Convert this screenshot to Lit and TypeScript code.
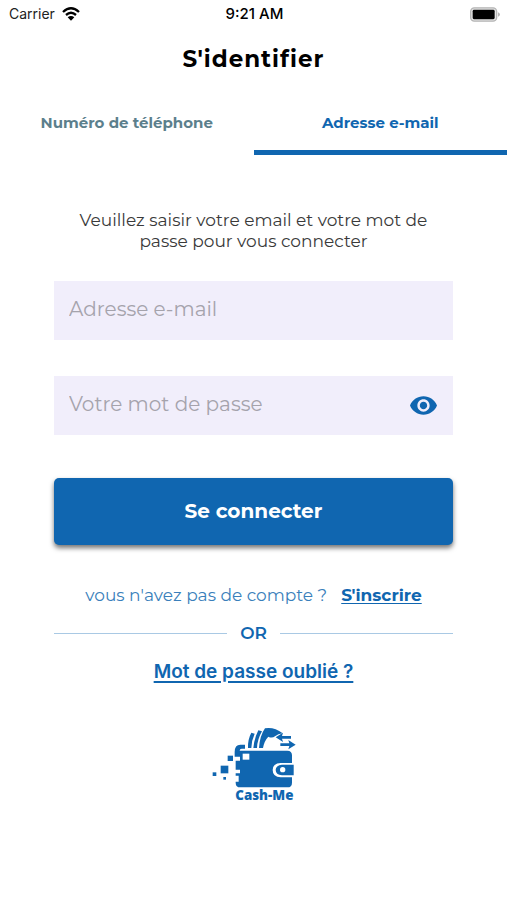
import { LitElement, html, css, svg } from "lit";
import { customElement, state } from "lit/decorators.js";

const wifiIcon = svg`
  <svg class="wifi" viewBox="0 0 54 42" aria-hidden="true">
    <g fill="none" stroke="#000" stroke-width="7">
      <path d="M3 15 Q27 -7 51 15" />
      <path d="M12 24 Q27 11 42 24" />
    </g>
    <path d="M27 41 L17 31 Q27 23 37 31 Z" />
  </svg>`;

const batteryIcon = svg`
  <svg class="battery" viewBox="0 0 90 44" aria-hidden="true">
    <rect x="2" y="2" width="78" height="40" rx="11" fill="#e4e4e4" stroke="#b4b4b4" stroke-width="4" />
    <rect x="8" y="8" width="66" height="28" rx="4" fill="#000" />
    <path d="M84 15 Q90 18 90 22 Q90 26 84 29 Z" fill="#b4b4b4" />
  </svg>`;

const eyeIcon = svg`
  <svg class="eye" viewBox="1 4.5 22 15" aria-hidden="true">
    <path fill="#1066b0" d="M12 4.5C7 4.5 2.73 7.61 1 12c1.73 4.39 6 7.5 11 7.5s9.27-3.11 11-7.5c-1.73-4.39-6-7.5-11-7.5zM12 17c-2.76 0-5-2.24-5-5s2.24-5 5-5 5 2.24 5 5-2.24 5-5 5zm0-8c-1.66 0-3 1.34-3 3s1.34 3 3 3 3-1.34 3-3-1.34-3-3-3z" />
  </svg>`;

const logo = svg`
  <svg class="logo" viewBox="-4 0 300 270" role="img" aria-label="Cash-Me">
    <g fill="#1066b0">
      <path d="M128 84 Q127 58 138 38 L148 41 Q139 60 138 84 Z" />
      <path d="M144 84 Q147 54 159 31 L170 34 Q156 58 155 84 Z" />
      <path d="M161 84 Q163 48 179 25 Q206 20 232 40 Q218 41 209 49 Q200 56 189 50 Q177 62 173 84 Z" />
      <path d="M211 52 L233 38 L230 48 H257 V56 H230 L233 66 Z" />
      <path d="M271 74 L249 60 L252 70 H225 V78 H252 L249 88 Z" />
      <path d="M88 96 Q88 74 105 74 H119 V86 H109 Q103 86 103 92 H246 Q260 92 260 106 V129 H226 Q202 130 202 150 Q202 171 226 172 H260 V188 Q260 202 246 202 H105 Q91 202 91 188 V185 H100 V167 H91 V160 H104 V149 H91 V122 H104 V110 H88 Z" />
      <path d="M230 134 H265 V166 H230 Q211 164 211 150 Q211 136 230 134 Z" />
      <rect x="67" y="107" width="16" height="16" />
      <rect x="46" y="137" width="23" height="23" />
      <rect x="22" y="157" width="11" height="11" />
      <rect x="54" y="171" width="8" height="8" />
    </g>
    <rect x="112" y="101" width="20" height="18" fill="#fff" />
    <circle cx="232" cy="149" r="8" fill="#fff" />
    <text class="brand" x="177" y="239" text-anchor="middle">Cash-Me</text>
  </svg>`;

@customElement("app-root")
export class AppRoot extends LitElement {
  @state() private passwordVisible = false;

  static styles = css`
    :host {
      display: block;
      min-height: 100vh;
      background: #fff;
      color: #000;
      font-family: Montserrat, Inter, "Liberation Sans", sans-serif;
    }
    * { box-sizing: border-box; }
    button, input { font-family: inherit; margin: 0; border: 0; }
    button { cursor: pointer; }
    .status {
      display: grid;
      grid-template-columns: 1fr auto 1fr;
      align-items: center;
      height: 28px;
      padding: 0 7px 0 9px;
      font-family: Inter, sans-serif;
      font-size: 14px;
      line-height: 20px;
    }
    .carrier { display: flex; align-items: center; gap: 7px; color: #222; }
    .time { font-size: 15px; font-weight: 500; }
    .wifi { width: 18px; height: 14px; }
    .battery { width: 30px; height: 15px; justify-self: end; }
    h1 {
      margin: 16px 0 0;
      text-align: center;
      font-size: 23px;
      line-height: 30px;
      font-weight: 700;
      letter-spacing: 1px;
    }
    .tabs { display: flex; margin-top: 16px; }
    .tab {
      flex: 1;
      height: 65px;
      padding: 5px 0 0;
      background: none;
      border-bottom: 5px solid transparent;
      color: #5c7f8c;
      font-size: 15px;
      line-height: 20px;
      font-weight: 700;
    }
    .tab.active { color: #1066b0; border-color: #1066b0; }
    .form {
      display: flex;
      flex-direction: column;
      padding: 55px 54px 0;
    }
    .intro {
      margin: 0 0 29px;
      padding: 0 16px;
      text-align: center;
      color: #3a3a3a;
      font-size: 17px;
      line-height: 21px;
    }
    .field {
      display: flex;
      align-items: center;
      height: 59px;
      margin-bottom: 36px;
      padding: 0 16px 0 15px;
      background: #f1eefb;
    }
    .field input {
      flex: 1;
      min-width: 0;
      padding: 0 0 4px;
      background: none;
      outline: none;
      color: #333;
      font-size: 20px;
      line-height: 24px;
    }
    .field input::placeholder { color: #a5a3ac; opacity: 1; }
    .reveal { display: flex; padding: 0; background: none; }
    .eye { width: 27px; height: 19px; }
    .submit {
      height: 67px;
      margin-top: 7px;
      padding: 0 0 2px;
      border-radius: 5px;
      background: #1066b0;
      box-shadow: 0 3px 5px rgba(0, 0, 0, 0.55);
      color: #fff;
      font-size: 20px;
      line-height: 24px;
      font-weight: 700;
    }
    .signup {
      display: flex;
      justify-content: center;
      gap: 14px;
      margin: 38px 0 0;
      color: #3a7fbb;
      font-size: 17px;
      line-height: 24px;
    }
    a { color: #1066b0; font-weight: 700; text-underline-offset: 2px; }
    .or {
      display: flex;
      align-items: center;
      gap: 13px;
      margin-top: 14px;
      color: #1066b0;
      font-size: 17px;
      line-height: 24px;
      font-weight: 600;
    }
    .or::before, .or::after { content: ""; flex: 1; height: 1px; background: #a9c9e4; }
    .forgot {
      align-self: center;
      margin-top: 15px;
      font-family: Inter, sans-serif;
      font-size: 19px;
      line-height: 24px;
      font-weight: 600;
      text-decoration-thickness: 2px;
      text-underline-offset: 3px;
    }
    .logo { align-self: center; width: 100px; height: 90px; margin-top: 36px; }
    .brand {
      fill: #1066b0;
      font-family: "Open Sans", sans-serif;
      font-size: 40px;
      font-weight: 800;
    }
  `;

  render() {
    return html`
      <header class="status">
        <div class="carrier"><span>Carrier</span>${wifiIcon}</div>
        <span class="time">9:21 AM</span>
        ${batteryIcon}
      </header>
      <main>
        <h1>S'identifier</h1>
        <div class="tabs" role="tablist">
          <button class="tab" role="tab" aria-selected="false">Numéro de téléphone</button>
          <button class="tab active" role="tab" aria-selected="true">Adresse e-mail</button>
        </div>
        <form class="form" @submit=${(e: Event) => e.preventDefault()}>
          <p class="intro">Veuillez saisir votre email et votre mot de passe pour vous connecter</p>
          <label class="field">
            <input type="email" placeholder="Adresse e-mail" aria-label="Adresse e-mail" />
          </label>
          <div class="field">
            <input
              type=${this.passwordVisible ? "text" : "password"}
              placeholder="Votre mot de passe"
              aria-label="Votre mot de passe"
            />
            <button
              class="reveal"
              type="button"
              aria-label="Afficher le mot de passe"
              @click=${() => (this.passwordVisible = !this.passwordVisible)}
            >${eyeIcon}</button>
          </div>
          <button class="submit" type="submit">Se connecter</button>
          <p class="signup"><span>vous n'avez pas de compte ?</span><a href="#inscription">S'inscrire</a></p>
          <div class="or">OR</div>
          <a class="forgot" href="#oubli">Mot de passe oublié ?</a>
          ${logo}
        </form>
      </main>
    `;
  }
}
